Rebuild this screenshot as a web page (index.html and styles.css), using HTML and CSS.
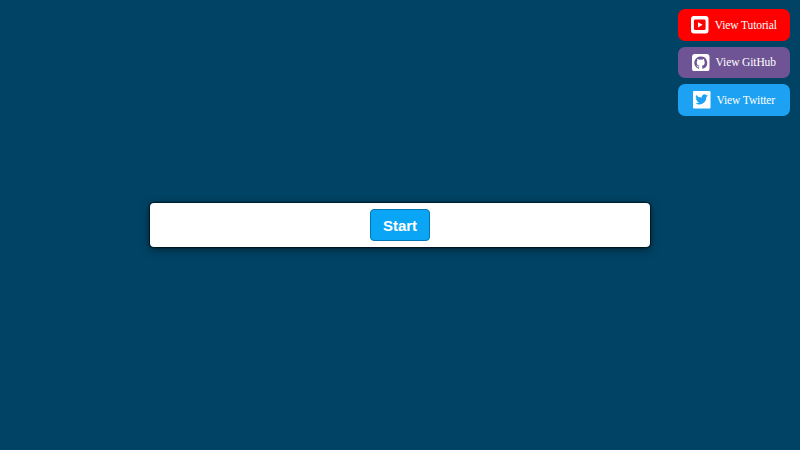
FILE: index.html
```html
<!DOCTYPE html>
<html lang="en">
<head>
<meta charset="utf-8">
<title>Start</title>
<link rel="stylesheet" href="styles.css">
</head>
<body>
<nav class="links">
  <a class="link link-youtube" href="#">
    <svg class="icon" viewBox="0 0 18 18"><path fill="#fff" fill-rule="evenodd" d="M3 0h12a3 3 0 0 1 3 3v12a3 3 0 0 1-3 3H3a3 3 0 0 1-3-3V3a3 3 0 0 1 3-3zM4.500 3.500A1.500 1.500 0 0 0 3 5v8a1.500 1.500 0 0 0 1.500 1.500h9A1.500 1.500 0 0 0 15 13V5a1.500 1.500 0 0 0-1.500-1.500zM7.200 6.300v5.400L12 9z"/></svg>
    <span>View Tutorial</span>
  </a>
  <a class="link link-github" href="#">
    <svg class="icon" viewBox="0 0 18 18"><path fill="#fff" fill-rule="evenodd" d="M3 0h12a3 3 0 0 1 3 3v12a3 3 0 0 1-3 3H3a3 3 0 0 1-3-3V3a3 3 0 0 1 3-3zM9 2.500A6.500 6.500 0 0 0 6.900 15.200c.3 0 .45-.15.45-.35v-1.200c-1.800.4-2.200-.8-2.200-.8-.3-.75-.7-.95-.7-.95-.6-.4 0-.4 0-.4.650.05 1 .7 1 .7.600 1 1.550.7 1.900.55.050-.45.250-.7.450-.9-1.450-.15-2.950-.7-2.950-3.200 0-.7.250-1.300.650-1.750-.050-.2-.3-.85.050-1.750 0 0 .55-.15 1.800.65a6 6 0 0 1 3.250 0c1.250-.8 1.800-.65 1.800-.65.350.9.1 1.550.05 1.750.4.450.65 1.050.65 1.750 0 2.500-1.500 3.050-2.950 3.200.25.2.45.6.45 1.200v1.800c0 .2.150.35.450.35A6.500 6.500 0 0 0 9 2.500z"/></svg>
    <span>View GitHub</span>
  </a>
  <a class="link link-twitter" href="#">
    <svg class="icon" viewBox="0 0 18 18"><path fill="#fff" fill-rule="evenodd" d="M1 0h16a1 1 0 0 1 1 1v16a1 1 0 0 1-1 1H1a1 1 0 0 1-1-1V1a1 1 0 0 1 1-1zM15.500 4.700c-.5.200-1 .350-1.500.400.550-.300.950-.850 1.150-1.450-.500.300-1.050.500-1.650.650a2.600 2.600 0 0 0-4.450 2.400A7.400 7.400 0 0 1 3.200 4a2.600 2.600 0 0 0 .8 3.500c-.4 0-.85-.100-1.200-.300 0 1.250.9 2.350 2.100 2.600-.4.100-.8.100-1.150.050.300 1.050 1.300 1.800 2.450 1.800A5.300 5.300 0 0 1 2.300 12.700a7.400 7.400 0 0 0 11.400-6.550c.7-.350 1.300-.850 1.800-1.450z"/></svg>
    <span>View Twitter</span>
  </a>
</nav>
<main class="panel">
  <button class="start" type="button">Start</button>
</main>
</body>
</html>
```
FILE: styles.css
```css
* {
  box-sizing: border-box;
}

html,
body {
  height: 100%;
}

body {
  margin: 0;
  background: #004364;
  display: flex;
  align-items: center;
  justify-content: center;
  overflow: hidden;
}

.links {
  position: absolute;
  top: 9px;
  right: 10px;
  width: 112px;
  display: flex;
  flex-direction: column;
  gap: 6px;
}

.link {
  height: 31.500px;
  border-radius: 7px;
  display: flex;
  align-items: center;
  justify-content: center;
  gap: 6px;
  color: #fff;
  text-decoration: none;
  font: 11.500px/14px "Liberation Serif", "Times New Roman", serif;
  letter-spacing: -0.120px;
}

.link span {
  padding-top: 0.400px;
}

.link-youtube {
  background: #ff0000;
}

.link-github {
  background: #6e5494;
}

.link-twitter {
  background: #1da1f2;
}

.icon {
  width: 17.500px;
  height: 17.500px;
  flex: none;
}

.panel {
  width: 500px;
  height: 44px;
  background: #fff;
  border-radius: 4px;
  box-shadow: 0 0 2px #000, 0 0 2px #000, 0 2px 8px rgba(0, 0, 0, 0.55);
  display: flex;
  align-items: center;
  justify-content: center;
}

.start {
  width: 60px;
  height: 32px;
  padding: 0;
  background: #0aa6f5;
  color: #fff;
  border: 1px solid #0077b3;
  border-radius: 4px;
  font: bold 15px "Liberation Sans", Arial, sans-serif;
}
```
